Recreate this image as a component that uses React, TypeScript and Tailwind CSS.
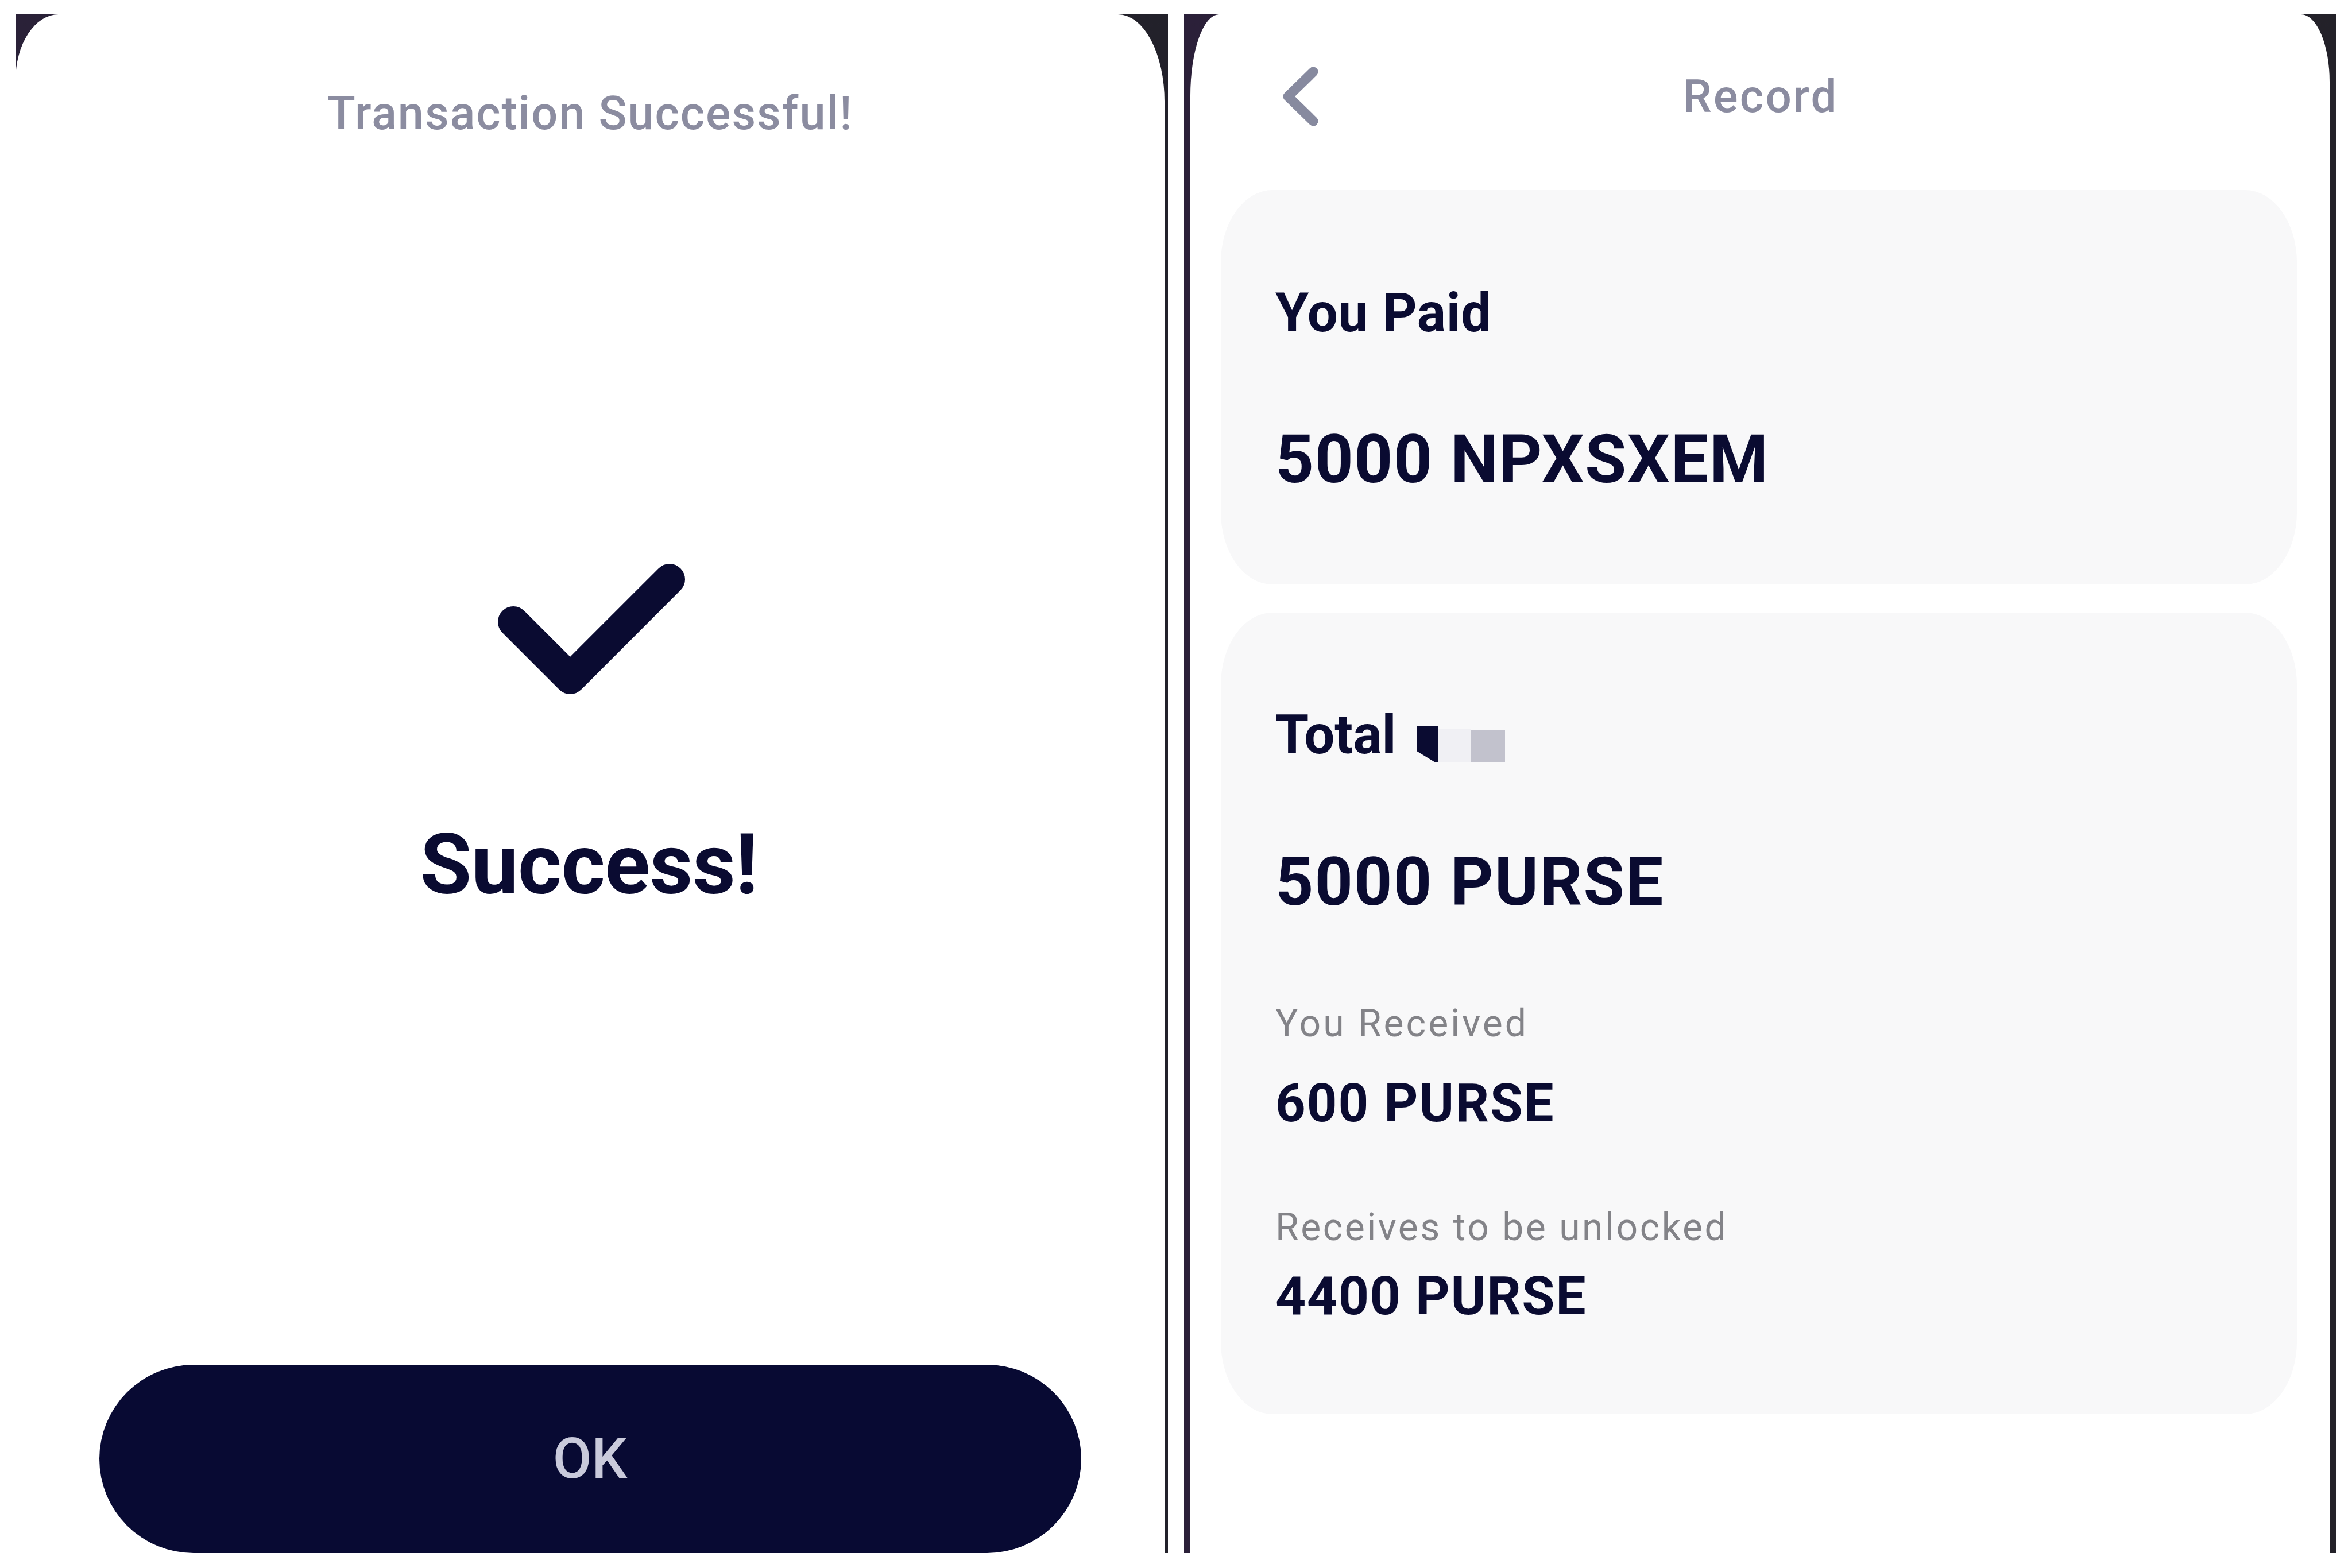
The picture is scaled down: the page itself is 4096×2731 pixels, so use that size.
import React from "react"

function SuccessScreen() {
  return (
    <div className="w-[2007px] h-full flex bg-linear-to-r from-[#2a2138] to-[#22212a]">
      <div className="flex-1 mr-[6px] bg-white rounded-tl-[75px_115px] rounded-tr-[81px_152px] flex flex-col items-center">
        <div className="mt-[132px] text-[81px] leading-none font-medium tracking-[2px] text-[#8b8ca0]">
          Transaction Successful!
        </div>
        <svg className="mt-[737px] ml-[5px]" width="340" height="245" viewBox="0 0 340 245" fill="none">
          <path d="M34 108 L133 207 L306 34" stroke="#0a0b31" strokeWidth="54" strokeLinecap="round" strokeLinejoin="round" />
        </svg>
        <div className="mt-[214px] mr-[4px] text-[146px] leading-none font-bold tracking-[-0.5px] text-[#0a0b31]">Success!</div>
        <button className="mt-auto w-[1710px] h-[328px] rounded-full bg-[#080a33] flex items-center justify-center">
          <span className="text-[98px] leading-none font-medium text-[#c9cadb]">OK</span>
        </button>
      </div>
    </div>
  )
}

function TotalBadge() {
  // blurred token logo next to "Total"
  return (
    <svg className="ml-[36px] mt-[29px]" width="154" height="66" viewBox="0 0 154 66">
      <rect x="37" y="8" width="58" height="57" fill="#f0f0f4" />
      <rect x="95" y="10" width="59" height="56" fill="#c2c2cd" />
      <polygon points="0,3 37,3 37,65 31,65 0,46" fill="#0a0b31" />
    </svg>
  )
}

function RecordScreen() {
  return (
    <div className="w-[2007px] h-full flex pl-[11px] pr-[12px] bg-linear-to-r from-[#2b2039] to-[#232129]">
      <div className="flex-1 bg-white rounded-tl-[50px_142px] rounded-tr-[50px_118px] flex flex-col">
        <div className="h-[286px] flex items-center">
          <div className="w-[260px] pl-[160px] flex items-center">
            <svg width="64" height="104" viewBox="0 0 64 104" fill="none">
              <path d="M54 9 L10 52 L54 95" stroke="#878a9f" strokeWidth="17" strokeLinecap="round" strokeLinejoin="round" />
            </svg>
          </div>
          <div className="flex-1 text-center text-[80px] leading-none font-medium tracking-[3px] text-[#8b8ca0]">Record</div>
          <div className="w-[258px]" />
        </div>

        <div className="mt-[20px] ml-[53px] w-[1874px] flex flex-col gap-[49px]">
          <section className="h-[687px] bg-[#f8f8f9] rounded-[90px/126px] pl-[95px] pt-[167px]">
            <div className="text-[94px] leading-none font-bold tracking-[0.5px] text-[#0a0b31]">You Paid</div>
            <div className="mt-[150px] text-[117px] leading-none font-bold tracking-[1.5px] text-[#0a0b31]">5000 NPXSXEM</div>
          </section>

          <section className="h-[1396px] bg-[#f8f8f9] rounded-[90px/126px] pl-[95px] pt-[166px]">
            <div className="flex items-start">
              <div className="text-[94px] leading-none font-bold text-[#0a0b31]">Total</div>
              <TotalBadge />
            </div>
            <div className="mt-[150px] text-[116px] leading-none font-bold tracking-[2px] text-[#0a0b31]">5000 PURSE</div>
            <div className="mt-[156px] text-[66px] leading-none tracking-[4px] text-[#838388]">You Received</div>
            <div className="mt-[60px] text-[92px] leading-none font-bold tracking-[2px] text-[#0a0b31]">600 PURSE</div>
            <div className="mt-[137px] text-[66px] leading-none tracking-[3.5px] text-[#838388]">Receives to be unlocked</div>
            <div className="mt-[40px] text-[93px] leading-none font-bold tracking-[1.5px] text-[#0a0b31]">4400 PURSE</div>
          </section>
        </div>
      </div>
    </div>
  )
}

export default function App() {
  return (
    <div className="w-[4096px] h-[2731px] bg-white flex gap-[28px] pl-[27px] pr-[27px] pt-[25px] pb-[26px] font-[Roboto,sans-serif]">
      <SuccessScreen />
      <RecordScreen />
    </div>
  )
}
